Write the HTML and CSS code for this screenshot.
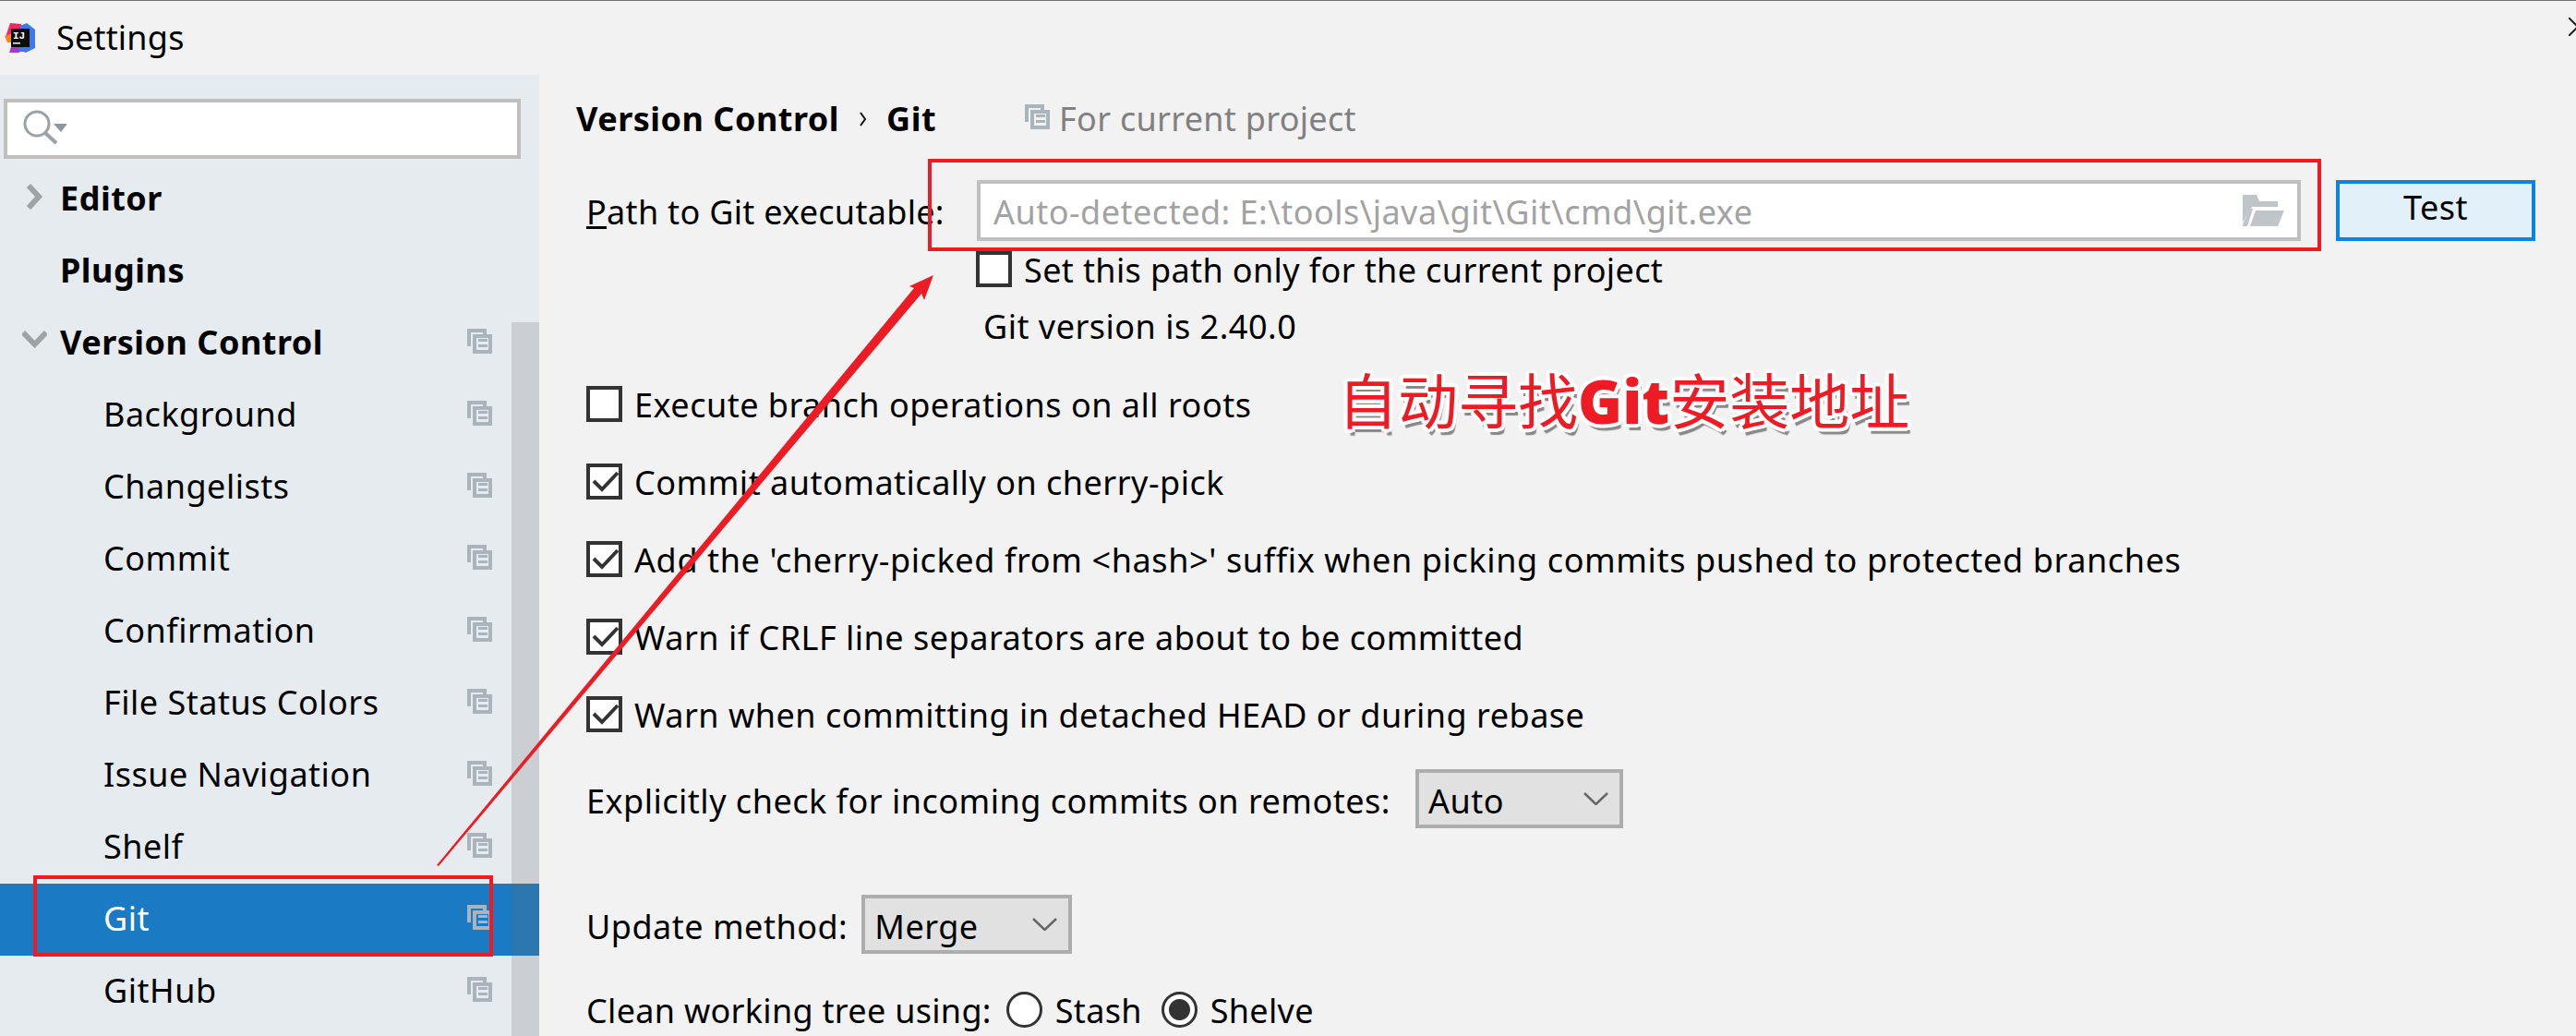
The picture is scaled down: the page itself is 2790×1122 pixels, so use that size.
FILE: index.html
```html
<!doctype html>
<html>
<head>
<title>Settings</title>
<meta charset="utf-8">
<link rel="stylesheet" href="styles.css">
</head>
<body>
<svg class="defs" width="0" height="0">
	<symbol id="copy" viewBox="0 0 27 27">
		<path d="M2 19V2h17v4" fill="none" stroke="currentColor" stroke-width="4"/>
		<path d="M8 8h17v17H8z" fill="none" stroke="currentColor" stroke-width="4"/>
		<path d="M12 11h10v3H12zM12 17h10v3H12z" fill="currentColor"/>
	</symbol>
	<symbol id="check" viewBox="0 0 31 31">
		<path d="M4 15l9 9L30 6" fill="none" stroke="#333" stroke-width="4"/>
	</symbol>
	<symbol id="chev" viewBox="0 0 27 14">
		<path d="M1 1l12.5 12L26 1" fill="none" stroke="#666" stroke-width="2.5"/>
	</symbol>
</svg>

<div id="titlebar">
	<svg class="logo" width="34" height="34" viewBox="0 0 34 34">
		<path d="M1 16L6 1l12 1 3 30-15 0 2-10z" fill="#f5256b"/>
		<path d="M0 15l8-3 2 10-7 0z" fill="#f7851e"/>
		<path d="M5 33l5-14 14 10-9 4z" fill="#a63ac9"/>
		<path d="M17 4l7-3 9 7 0 20-10 5-8-3z" fill="#3f78e8"/>
		<rect x="7" y="7" width="20" height="20" fill="#0c0c0c"/>
		<text class="logo-text" x="9" y="18">IJ</text>
		<rect x="9" y="22" width="8" height="1.5" fill="#fff"/>
	</svg>
	<span class="window-title">Settings</span>
	<svg class="close" width="8" height="20" viewBox="0 0 8 20">
		<path d="M0 0l10 10L0 20" fill="none" stroke="#222" stroke-width="2"/>
	</svg>
</div>

<div id="main">
	<div id="sidebar">
		<div class="search">
			<svg width="50" height="50" viewBox="0 0 50 50">
				<ellipse cx="18" cy="19" rx="13" ry="13" fill="none" stroke="#9aa2a7" stroke-width="3"/>
				<path d="M27 29l12 11" stroke="#9aa2a7" stroke-width="4"/>
				<path d="M36 19h15l-7 9z" fill="#8f979c"/>
			</svg>
		</div>
		<div class="tree">
			<div class="row top"><svg class="arrow" width="27" height="30" viewBox="0 0 27 30"><path d="M7 3l11 12L7 27" fill="none" stroke="#9ea3a6" stroke-width="6"/></svg>Editor</div>
			<div class="row top"><span class="arrow"></span>Plugins</div>
			<div class="row top"><svg class="arrow" width="27" height="30" viewBox="0 0 27 30"><path d="M1 6l12.500 13L26 6" fill="none" stroke="#9ea3a6" stroke-width="6"/></svg>Version Control<svg class="copy"><use href="#copy"/></svg></div>
			<div class="row sub">Background<svg class="copy"><use href="#copy"/></svg></div>
			<div class="row sub">Changelists<svg class="copy"><use href="#copy"/></svg></div>
			<div class="row sub">Commit<svg class="copy"><use href="#copy"/></svg></div>
			<div class="row sub">Confirmation<svg class="copy"><use href="#copy"/></svg></div>
			<div class="row sub">File Status Colors<svg class="copy"><use href="#copy"/></svg></div>
			<div class="row sub">Issue Navigation<svg class="copy"><use href="#copy"/></svg></div>
			<div class="row sub">Shelf<svg class="copy"><use href="#copy"/></svg></div>
			<div class="row sub selected">Git<svg class="copy"><use href="#copy"/></svg></div>
			<div class="row sub">GitHub<svg class="copy"><use href="#copy"/></svg></div>
		</div>
		<div class="scrollbar"></div>
	</div>

	<div id="content">
		<div class="crumbs">
			<b>Version Control</b>
			<svg class="crumb-sep" width="8" height="16" viewBox="0 0 8 16"><path d="M1 1l5 7-5 7" fill="none" stroke="#111" stroke-width="2"/></svg>
			<b>Git</b>
			<svg class="copy crumb-copy"><use href="#copy"/></svg>
			<span class="scope">For current project</span>
		</div>

		<div class="form">
			<div class="path-row">
				<span class="path-label"><u>P</u>ath to Git executable:</span>
				<div class="path-input">
					<span class="path-value">Auto-detected: E:\tools\java\git\Git\cmd\git.exe</span>
					<svg width="46" height="34" viewBox="0 0 46 34">
						<path d="M1 0h15l3 7h20v6H11L1 30z" fill="#c0c5c9"/>
						<path d="M9 34l6-17h31l-7 17z" fill="#c0c5c9"/>
						<path d="M1 34V32L9 15h3L6 34z" fill="#c0c5c9"/>
					</svg>
				</div>
				<button class="test">Test</button>
			</div>
			<label class="check path-only"><span class="box"></span>Set this path only for the current project</label>
			<div class="git-version">Git version is 2.40.0</div>

			<div class="checks">
				<label class="check"><span class="box"></span>Execute branch operations on all roots</label>
				<label class="check"><span class="box"><svg><use href="#check"/></svg></span>Commit automatically on cherry-pick</label>
				<label class="check wide"><span class="box"><svg><use href="#check"/></svg></span>Add the 'cherry-picked from &lt;hash&gt;' suffix when picking commits pushed to protected branches</label>
				<label class="check"><span class="box"><svg><use href="#check"/></svg></span>Warn if CRLF line separators are about to be committed</label>
				<label class="check"><span class="box"><svg><use href="#check"/></svg></span>Warn when committing in detached HEAD or during rebase</label>
			</div>

			<div class="combo-row incoming">
				Explicitly check for incoming commits on remotes:
				<div class="combo auto">Auto<svg><use href="#chev"/></svg></div>
			</div>
			<div class="combo-row update">
				Update method:
				<div class="combo merge">Merge<svg><use href="#chev"/></svg></div>
			</div>
			<div class="clean">
				Clean working tree using:
				<span class="radio first"></span>Stash
				<span class="radio second on"></span>Shelve
			</div>
		</div>
	</div>
</div>

<!-- annotations drawn on top of the screenshot -->
<svg class="marks" width="2790" height="1122" viewBox="0 0 2790 1122">
	<rect x="1007" y="174" width="1505" height="96" fill="none" stroke="#ed1c24" stroke-width="4"/>
	<rect x="38" y="950" width="494" height="84" fill="none" stroke="#ed1c24" stroke-width="4"/>
	<path d="M473 937L990 312L985 310L1011 298L1001 325L998 318L475 938z" fill="#ed1c24"/>
</svg>
<div class="note">自动寻找<b>Git</b>安装地址</div>
</body>
</html>
```

FILE: styles.css
```css
* {
	box-sizing: border-box;
}
html, body {
	margin: 0;
	height: 1122px;
	overflow: hidden;
}
body {
	background-color: #f2f2f2;
	font-family: "Noto Sans", "Noto Sans CJK SC", sans-serif;
	font-size: 36px;
	letter-spacing: .5px;
	line-height: 48px;
	color: #000;
}
.defs {
	display: block;
	height: 0;
}

#titlebar {
	display: flex;
	align-items: center;
	height: 81px;
	padding-left: 5px;
	border-top: 1px solid #707070;
	position: relative;
}
.logo {
	margin-right: 22px;
}
.logo-text {
	font-family: "Liberation Mono", monospace;
	font-size: 11px;
	font-weight: bold;
	letter-spacing: 0;
	fill: #fff;
}
.window-title {
	letter-spacing: .2px;
}
.close {
	position: absolute;
	right: 0;
	top: 18px;
}

#main {
	display: flex;
	height: 1041px;
}
#sidebar {
	position: relative;
	flex: 0 0 584px;
	background: #e6ebef;
}
.search {
	display: flex;
	align-items: center;
	width: 560px;
	height: 65px;
	margin: 26px 0 5px 4px;
	padding-left: 14px;
	background: #fff;
	border: 4px solid #bfbfbf;
}
.row {
	display: flex;
	align-items: center;
	height: 78px;
	padding-right: 51px;
	padding-bottom: 3px;
}
.row.top {
	padding-left: 24px;
	font-weight: bold;
}
.row.sub {
	padding-left: 112px;
}
.row.selected {
	background: #1a7ac3;
	color: #fff;
}
.arrow {
	flex: 0 0 27px;
	margin-right: 14px;
	margin-bottom: 3px;
}
.copy {
	width: 27px;
	height: 27px;
	margin-left: auto;
	margin-bottom: 3px;
	color: #a9b4bb;
}
.scrollbar {
	position: absolute;
	top: 268px;
	right: 0;
	bottom: 0;
	width: 30px;
	background: rgba(110, 112, 115, .225);
}

#content {
	flex: 1;
	padding-left: 40px;
}
.crumbs {
	display: flex;
	align-items: center;
	height: 48px;
	margin-top: 21px;
	padding-top: 5px;
}
.crumb-sep {
	margin: 0 21px 0 22px;
}
.crumb-copy {
	margin: -5px 10px 0 96px;
	color: #a9b4bb;
}
.scope {
	letter-spacing: .3px;
	color: #808080;
}

.form {
	padding-left: 11px;
}
.path-row {
	display: flex;
	align-items: center;
	height: 66px;
	margin-top: 45px;
}
.path-label {
	width: 423px;
	padding-top: 3px;
	letter-spacing: .3px;
}
.path-input {
	display: flex;
	align-items: center;
	justify-content: space-between;
	width: 1434px;
	height: 66px;
	padding: 0 14px 0 14px;
	background: #fff;
	border: 4px solid #bfbfbf;
	color: #a2a2a2;
}
.path-value {
	padding-top: 3px;
}
.test {
	width: 216px;
	height: 66px;
	margin: 0 0 0 38px;
	padding: 0 0 6px;
	background: #e2f0fa;
	border: 4px solid #0a84e0;
	font: inherit;
	letter-spacing: inherit;
	color: #000;
}

.check {
	display: flex;
	align-items: center;
	height: 48px;
	padding-top: 3px;
}
.check.wide {
	letter-spacing: .62px;
}
.box {
	flex: 0 0 39px;
	height: 39px;
	margin: -3px 13px 0 0;
	background: #fff;
	border: 4px solid #333;
}
.box svg {
	display: block;
	width: 31px;
	height: 31px;
}
.path-only {
	margin: 6px 0 0 422px;
	letter-spacing: .38px;
}
.git-version {
	margin: 15px 0 0 430px;
}
.checks {
	display: flex;
	flex-direction: column;
	gap: 36px;
	margin-top: 35px;
}

.combo-row {
	display: flex;
	align-items: center;
	height: 64px;
	padding-top: 5px;
}
.incoming {
	margin-top: 36px;
}
.update {
	margin-top: 72px;
}
.combo {
	display: flex;
	align-items: center;
	justify-content: space-between;
	height: 64px;
	margin-top: -5px;
	padding: 5px 12px 0 10px;
	background: #e1e1e1;
	border: 4px solid #adadad;
}
.combo svg {
	width: 27px;
	height: 14px;
	margin-top: -5px;
}
.auto {
	width: 225px;
	margin-left: 27px;
}
.merge {
	width: 228px;
	margin-left: 15px;
}

.clean {
	display: flex;
	align-items: center;
	height: 48px;
	margin-top: 36px;
	padding-top: 3px;
	letter-spacing: .3px;
}
.radio {
	flex: 0 0 39px;
	height: 39px;
	margin: -3px 14px 0 16px;
	background: #fff;
	border: 3px solid #333;
	border-radius: 50%;
}
.radio.second {
	margin-left: 21px;
}
.radio.on {
	border-width: 3px;
	background: radial-gradient(circle, #333 0 11px, #fff 12px);
}

.marks {
	position: absolute;
	left: 0;
	top: 0;
}
.note {
	position: absolute;
	left: 1449px;
	top: 393px;
	font-family: "Noto Sans CJK SC", sans-serif;
	font-size: 65px;
	letter-spacing: 0;
	line-height: 76px;
	white-space: nowrap;
	color: #ed1c24;
	text-shadow: 4px 0 0 #fff, -4px 0 0 #fff, 0 4px 0 #fff, 0 -4px 0 #fff, 3px 3px 0 #fff, -3px 3px 0 #fff, 3px -3px 0 #fff, -3px -3px 0 #fff, 3px 7px 1px #888;
}
.note b {
	font-family: "Open Sans", sans-serif;
	font-weight: 800;
}
```
